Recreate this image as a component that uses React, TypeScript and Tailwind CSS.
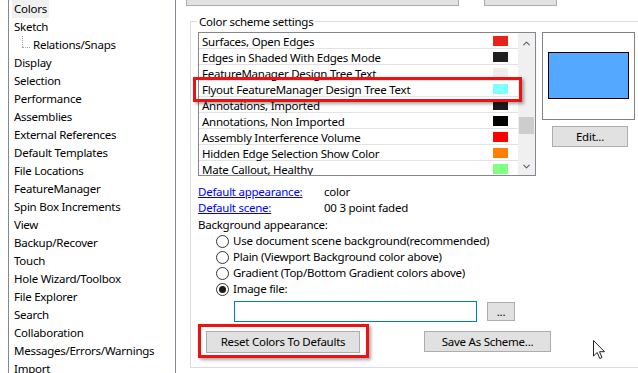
import { ChevronUp, ChevronDown } from 'lucide-react';

const treeItems = [
  'Colors',
  'Sketch',
  'Relations/Snaps',
  'Display',
  'Selection',
  'Performance',
  'Assemblies',
  'External References',
  'Default Templates',
  'File Locations',
  'FeatureManager',
  'Spin Box Increments',
  'View',
  'Backup/Recover',
  'Touch',
  'Hole Wizard/Toolbox',
  'File Explorer',
  'Search',
  'Collaboration',
  'Messages/Errors/Warnings',
  'Import',
];

const schemeRows = [
  { label: 'Surfaces, Open Edges', color: 'bg-[#e8231a]' },
  { label: 'Edges in Shaded With Edges Mode', color: 'bg-[#202020]' },
  { label: 'FeatureManager Design Tree Text', color: 'bg-[#eeeeee]' },
  { label: 'Flyout FeatureManager Design Tree Text', color: 'bg-[#80ffff]' },
  { label: 'Annotations, Imported', color: 'bg-[#1a1a1a]' },
  { label: 'Annotations, Non Imported', color: 'bg-[#000000]' },
  { label: 'Assembly Interference Volume', color: 'bg-[#ff0000]' },
  { label: 'Hidden Edge Selection Show Color', color: 'bg-[#ff8000]' },
  { label: 'Mate Callout, Healthy', color: 'bg-[#80ff80]' },
];

const radios = [
  { label: 'Use document scene background(recommended)', checked: false },
  { label: 'Plain (Viewport Background color above)', checked: false },
  { label: 'Gradient (Top/Bottom Gradient colors above)', checked: false },
  { label: 'Image file:', checked: true },
];

function TreePanel() {
  return (
    <div className="ml-2 -mt-px h-[380px] w-[168px] shrink-0 border border-[#828790] bg-white pl-[3px]">
      {treeItems.map((item, i) => {
        if (item === 'Relations/Snaps') {
          return (
            <div key={item} className="relative flex h-[18px] items-center pl-[21px]">
              <span className="absolute left-[10px] top-0 h-[11px] border-l border-dotted border-[#a0a0a0]" />
              <span className="absolute left-[10px] top-[11px] w-[8px] border-t border-dotted border-[#a0a0a0]" />
              {item}
            </div>
          );
        }
        return (
          <div key={item} className="flex h-[18px] items-center">
            <span className={i === 0 ? 'bg-[#f0f0f0] px-[2px] leading-[18px]' : 'px-[2px] leading-[18px]'}>{item}</span>
          </div>
        );
      })}
    </div>
  );
}

function Button({ className, children }: { className: string; children?: React.ReactNode }) {
  return (
    <div className={`flex items-center justify-center border border-[#adadad] bg-[#e1e1e1] ${className}`}>
      {children}
    </div>
  );
}

function Radio({ checked }: { checked: boolean }) {
  return (
    <span className="flex h-[13px] w-[13px] items-center justify-center rounded-full border border-[#333333] bg-white">
      {checked && <span className="h-[7px] w-[7px] rounded-full bg-[#1a1a1a]" />}
    </span>
  );
}

function SchemeList() {
  return (
    <div className="flex h-[144px] w-[338px] overflow-hidden border border-[#828790] bg-white">
      <div className="flex-1">
        {schemeRows.map((row) => (
          <div key={row.label} className="flex h-[16px] shrink-0 border-b border-[#e3e3e3] pl-[3px] pr-[10px]">
            <span className="flex-1 pt-px leading-[15px]">{row.label}</span>
            <span className={`mt-[3px] h-[10px] w-[15px] ${row.color}`} />
          </div>
        ))}
      </div>
      <div className="flex w-[17px] flex-col items-center bg-[#f0f0f0]">
        <div className="flex h-[17px] items-center justify-center pt-[3px]">
          <ChevronUp size={11} strokeWidth={2.5} className="text-[#606060]" />
        </div>
        <div className="mt-[67px] h-[17px] w-[15px] bg-[#cdcdcd]" />
        <div className="mt-auto flex h-[17px] items-center justify-center">
          <ChevronDown size={11} strokeWidth={2.5} className="text-[#606060]" />
        </div>
      </div>
    </div>
  );
}

export default function App() {
  return (
    <div className="relative flex h-[373px] w-[638px] overflow-hidden bg-white font-['Noto_Sans',sans-serif] text-[11.5px] tracking-[-0.25px] text-black">
      <TreePanel />

      <div className="flex min-w-0 flex-1 flex-col">
        <div className="flex h-[6px] shrink-0">
          <Button className="ml-[10px] h-[6px] w-[273px] border-t-0" />
          <Button className="ml-[25px] h-[6px] w-[73px] border-t-0" />
        </div>

        <div className="relative ml-[14px] mt-[15px] h-[347px] w-[470px] shrink-0 border-b border-l border-t border-[#dcdcdc] pl-[7px] pt-[10px]">
          <span className="absolute -top-[8px] left-[6px] bg-white px-[2px] leading-[16px]">Color scheme settings</span>

          <div className="flex">
            <SchemeList />
            <div className="ml-[6px] flex flex-col">
              <div className="h-[88px] w-[93px] border border-[#828282] bg-white pl-[5px] pt-[19px]">
                <div className="h-[47px] w-[81px] border border-black bg-[#55a8ff]" />
              </div>
              <Button className="ml-[10px] mt-[6px] h-[21px] w-[76px]">Edit...</Button>
            </div>
          </div>

          <div className="mt-[8px] flex h-[16px] items-center">
            <span className="w-[126px] text-[#0000ff] underline">Default appearance:</span>
            <span>color</span>
          </div>
          <div className="flex h-[16px] items-center">
            <span className="w-[126px] text-[#0000ff] underline">Default scene:</span>
            <span>00 3 point faded</span>
          </div>
          <div className="mt-[1px] flex h-[16px] items-center">Background appearance:</div>

          <div className="pl-[18px]">
            {radios.map((r) => (
              <div key={r.label} className="flex h-[16px] items-center gap-[4px]">
                <Radio checked={r.checked} />
                <span>{r.label}</span>
              </div>
            ))}
            <div className="mt-[4px] flex items-start pl-[18px]">
              <div className="h-[21px] w-[243px] border border-[#0078d7] bg-white" />
              <Button className="ml-[10px] mt-px h-[19px] w-[28px] leading-none">...</Button>
            </div>
          </div>

          <div className="mt-[9px] flex items-start pl-[8px]">
            <Button className="h-[22px] w-[154px]">Reset Colors To Defaults</Button>
            <Button className="ml-[64px] h-[21px] w-[127px]">Save As Scheme...</Button>
          </div>
        </div>
      </div>

      <div className="pointer-events-none absolute left-[193px] top-[77px] h-[25px] w-[329px] border-[3px] border-[#ee1111] shadow-[2px_2px_3px_rgba(0,0,0,0.35)]" />
      <div className="pointer-events-none absolute left-[198px] top-[324px] h-[34px] w-[171px] border-[3px] border-[#ee1111] shadow-[2px_2px_3px_rgba(0,0,0,0.35)]" />

      <svg className="pointer-events-none absolute left-[593px] top-[340px]" width="13" height="20" viewBox="0 0 13 20">
        <path d="M0.5 0.5 L0.5 16 L4.2 12.5 L6.8 18.5 L9 17.5 L6.5 11.7 L11.5 11.7 Z" fill="white" stroke="#222" strokeWidth="1" strokeLinejoin="miter" />
      </svg>
    </div>
  );
}
